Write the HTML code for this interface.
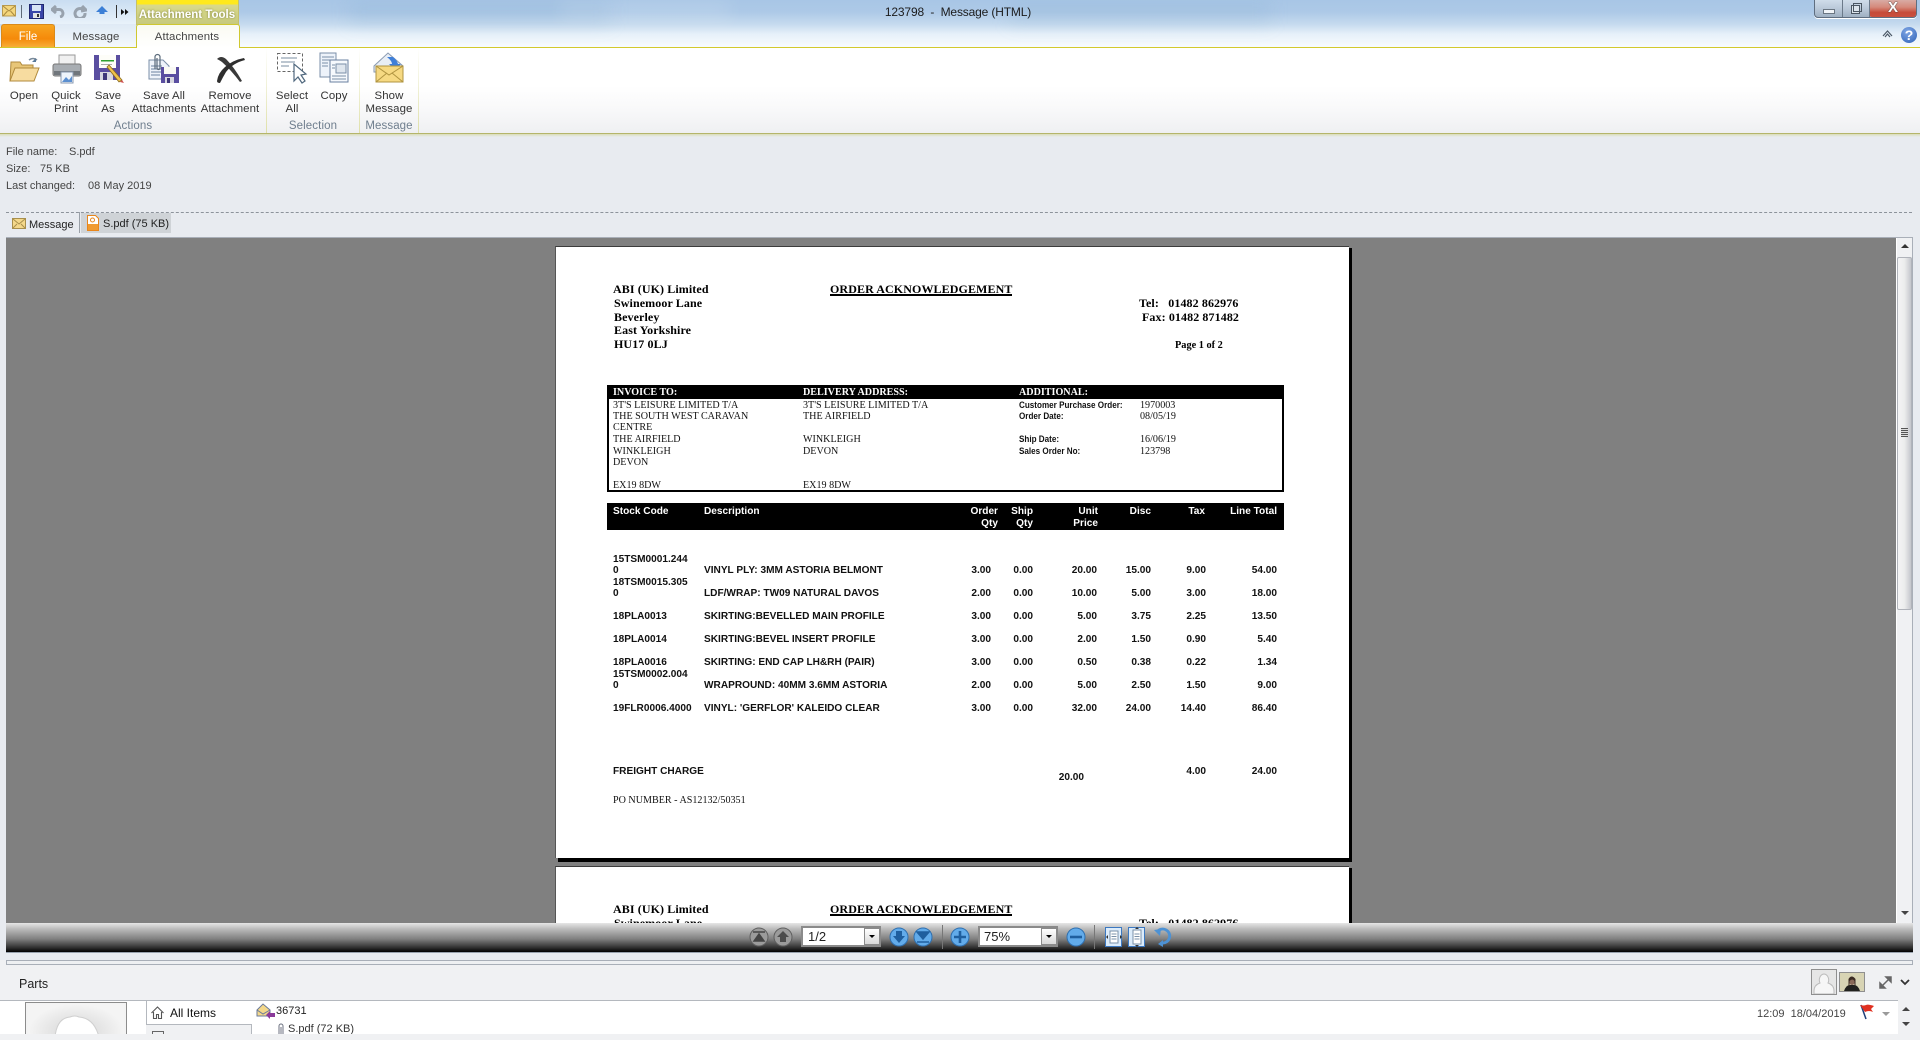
<!DOCTYPE html>
<html><head><meta charset="utf-8"><title>123798 - Message (HTML)</title>
<style>
html,body{margin:0;padding:0;width:1920px;height:1040px;overflow:hidden;background:#e8ebf0}
body{position:relative;font-family:"Liberation Sans",sans-serif;font-size:11.5px;color:#3b3b3b}
div,span,svg{position:absolute;box-sizing:border-box}
.t{white-space:pre;line-height:14px}
.c{transform:translateX(-50%)}
.r{text-align:right;transform:translateX(-100%)}
.rb{font-size:11.4px;color:#333;letter-spacing:.1px}
.i{font-size:11px;color:#444}
.g{font-size:11.5px;color:#6f7e8e;letter-spacing:.1px}
.s{font-family:"Liberation Serif",serif;font-weight:bold;color:#000;font-size:12px;letter-spacing:.1px}
.a{font-family:"Liberation Serif",serif;color:#111;font-size:10.1px}
.h{font-family:"Liberation Serif",serif;font-weight:bold;color:#fff;font-size:10.1px}
.l{font-weight:bold;color:#111;font-size:9.5px;transform:scaleX(.853);transform-origin:0 50%}
.b{font-weight:bold;color:#111;font-size:10.1px}
.w{font-weight:bold;color:#fff;font-size:10.1px}
</style></head><body>

<!-- title bar -->
<div style="left:0;top:0;width:1920px;height:47px;background:linear-gradient(#a8c6e6 0,#adc9e7 12px,#c5daee 24px,#e6f0f9 34px,#f6fafe 46px)"></div>
<div style="left:350px;top:0;width:260px;height:24px;background:rgba(120,160,200,.16);filter:blur(9px)"></div>
<div style="left:1010px;top:0;width:260px;height:24px;background:rgba(120,160,200,.14);filter:blur(9px)"></div>
<div style="left:560px;top:0;width:170px;height:22px;background:rgba(255,255,255,.12);filter:blur(9px)"></div>
<div style="left:0;top:0;width:136px;height:24px;background:linear-gradient(#c9ddf1,#e9f2fa)"></div>
<div class="t c" style="left:958px;top:5px;font-size:12px;color:#1c1c1c;letter-spacing:-.15px">123798  -  Message (HTML)</div>

<!-- QAT -->
<svg style="left:2px;top:5px" width="14" height="12" viewBox="0 0 14 12"><rect x=".5" y=".5" width="13" height="10.500" fill="#f4d67c" stroke="#b89a50"/><path d="M1 1l6 5 6-5M1 11l4.500-5M13 11L8.500 6" fill="none" stroke="#a98a40"/></svg>
<div style="left:21px;top:5px;width:1px;height:13px;background:#5f6b78"></div>
<svg style="left:29px;top:4px" width="15" height="15" viewBox="0 0 15 15"><rect width="14" height="14" x=".5" y=".5" fill="#3a46a8" stroke="#20286e"/><rect x="3" y="1" width="9" height="6" fill="#d8e4f5"/><rect x="4" y="9" width="7" height="5" fill="#e5e5e5"/><rect x="8" y="10" width="2" height="3" fill="#333"/></svg>
<svg style="left:51px;top:5px" width="14" height="13" viewBox="0 0 14 13"><path d="M5 1L1 4.500 5 8M2 4.500h6a3.800 3.800 0 0 1 1 7.500" fill="none" stroke="#98a2ad" stroke-width="3"/></svg>
<svg style="left:73px;top:5px" width="14" height="13" viewBox="0 0 14 13"><path d="M9 1l4 4-5 1M10 4.500A5 5 0 1 0 12 8" fill="none" stroke="#98a2ad" stroke-width="3"/></svg>
<svg style="left:95px;top:6px" width="14" height="10" viewBox="0 0 14 10"><path d="M7 0l6 6H9.500v2h-5V6H1z" fill="#3c7fd6"/></svg>
<div style="left:116px;top:5px;width:1px;height:13px;background:#333"></div>
<svg style="left:121px;top:9px" width="8" height="6" viewBox="0 0 8 6"><path d="M0 0l3.500 3L0 6zM4 0l3.500 3L4 6z" fill="#111"/></svg>

<!-- tabs -->
<div style="left:1px;top:24px;width:54px;height:24px;background:linear-gradient(#f7a51f,#f58a0a 60%,#f8b23c);border:1px solid #d98a1a;border-bottom:0;border-radius:3px 3px 0 0"></div>
<div class="t c" style="left:28px;top:30px;color:#fff;font-size:11.5px">File</div>
<div style="left:55px;top:24px;width:81px;height:23px;background:linear-gradient(#dfeaf5,#f4f8fc)"></div>
<div class="t c rb" style="left:96px;top:30px;color:#444">Message</div>
<div style="left:136px;top:0;width:103px;height:25px;background:linear-gradient(#ffe91c 0,#ffe91c 4px,#dad98a 5px,#c6c97e 100%);border-left:1px solid #c5c06a;border-right:1px solid #c5c06a"></div>
<div class="t c" style="left:187px;top:8px;color:#fff;font-size:11.5px;font-weight:bold;text-shadow:0 0 2px #7f8240">Attachment Tools</div>
<div style="left:136px;top:24px;width:104px;height:24px;background:linear-gradient(#fafbf2,#fff);border:1px solid #cfc830;border-bottom:0;border-radius:3px 3px 0 0"></div>
<div class="t c rb" style="left:187px;top:30px;color:#444">Attachments</div>

<!-- ribbon -->
<div style="left:0;top:47px;width:136px;height:1px;background:#d2c92e"></div>
<div style="left:239px;top:47px;width:1681px;height:1px;background:#d2c92e"></div>
<div style="left:0;top:48px;width:1920px;height:85px;background:linear-gradient(#fff 0,#fff 45%,#f9f9fa 70%,#eff0f2 100%)"></div>
<div style="left:137px;top:47px;width:102px;height:2px;background:#fff"></div>
<div style="left:0;top:133px;width:1920px;height:1px;background:#b5b56a"></div>
<div style="left:0;top:134px;width:1920px;height:3px;background:linear-gradient(#d9dcb8,#e8ebf0)"></div>
<div style="left:266px;top:48px;width:1px;height:85px;background:linear-gradient(#fff,#dfe0a8)"></div>
<div style="left:359px;top:48px;width:1px;height:85px;background:linear-gradient(#fff,#dfe0a8)"></div>
<div style="left:418px;top:48px;width:1px;height:85px;background:linear-gradient(#fff,#dfe0a8)"></div>

<!-- ribbon icons -->
<svg style="left:9px;top:55px" width="32" height="28" viewBox="0 0 32 28"><path d="M1 26L2 7h9l2 3h11v4H7z" fill="#e8c678" stroke="#b08a3c"/><path d="M1 26l5-13h24l-5 13z" fill="#f7dca0" stroke="#b08a3c"/><path d="M20 5q4-3 8 0" fill="none" stroke="#7a8a9a" stroke-width="1.500"/><path d="M27 3v4h-4z" fill="#5a7a9a"/></svg>
<svg style="left:52px;top:54px" width="30" height="30" viewBox="0 0 30 30"><rect x="7" y="1" width="16" height="10" fill="#f0f0f0" stroke="#999"/><rect x="1" y="10" width="28" height="12" rx="2" fill="#a8adb2" stroke="#777"/><rect x="2" y="17" width="26" height="4" fill="#70767c"/><rect x="9" y="18" width="12" height="11" fill="#eef4fb" stroke="#8a9ab0"/><path d="M10 28l4-5 3 3 3-4v6z" fill="#5b8fd0"/></svg>
<svg style="left:94px;top:55px" width="31" height="29" viewBox="0 0 31 29"><path d="M0 0h26v25H0z" fill="#5a4ea0"/><rect x="5" y="0" width="17" height="13" fill="#fdfdf8"/><rect x="7" y="5" width="13" height="1.500" fill="#30a030"/><rect x="7" y="9" width="11" height="1" fill="#aaa"/><rect x="6" y="17" width="13" height="8" fill="#d8d8e0"/><rect x="9" y="18" width="4" height="7" fill="#40387a"/><path d="M15 10l13 15-3 2L13 12z" fill="#eec24c" stroke="#8a6a20" stroke-width=".8"/><path d="M28 25l2 3-4-1z" fill="#d05050"/></svg>
<svg style="left:148px;top:53px" width="32" height="31" viewBox="0 0 32 31"><path d="M1 7h14l6 6v13H1z" fill="#eef3fa" stroke="#7b8fa8"/><path d="M3 13h11M3 16h11M3 19h11M3 22h9" stroke="#6b80a0"/><path d="M7 16V4a2.500 2.500 0 0 1 5 0v11a1.500 1.500 0 0 1-3 0V5" fill="none" stroke="#5a6a7a" stroke-width="1.200"/><path d="M13 14h18v16H13z" fill="#5a4ea0"/><rect x="16" y="14" width="12" height="7" fill="#fafaf4"/><rect x="17" y="24" width="9" height="6" fill="#d8d8e0"/><rect x="19" y="25" width="3" height="5" fill="#40387a"/></svg>
<svg style="left:217px;top:55px" width="28" height="28" viewBox="0 0 28 28"><path d="M0 4Q4 0 9 4 17 12 25 26l-2 1Q14 15 5 7 2 5 0 4z" fill="#3a3a3a"/><path d="M28 5Q16 8 9 17 6 22 3 28 0 28 0 26 1 18 8 12 16 5 27 3z" fill="#2e2e2e"/></svg>
<svg style="left:276px;top:52px" width="32" height="32" viewBox="0 0 32 32"><rect x="1.500" y="1.500" width="25" height="18" fill="#fff" stroke="#666" stroke-dasharray="3 2"/><path d="M5 6h16M5 10h14M5 14h8" stroke="#7a8ca0"/><path d="M18 12v17l4-4 4 6 3-2-4-6 5-1z" fill="#fff" stroke="#50687e" stroke-width="1.200"/></svg>
<svg style="left:318px;top:52px" width="32" height="32" viewBox="0 0 32 32"><path d="M2 1h16v24H2z" fill="#eef3fa" stroke="#7b8fa8"/><path d="M4 5h12M4 8h12M4 11h6M4 14h6" stroke="#7b8fa8"/><path d="M12 8h18v22H12z" fill="#f6f9fd" stroke="#6a80a0"/><rect x="18" y="12" width="10" height="9" fill="#dfe6ee" stroke="#7b8fa8"/><path d="M14 24h14M14 27h14M14 13h3M14 16h3" stroke="#7b8fa8"/></svg>
<svg style="left:373px;top:52px" width="32" height="32" viewBox="0 0 32 32"><path d="M1 14L15 1l15 13v6H1z" fill="#e8eef6" stroke="#8a9ab0"/><path d="M14 5h6q4 3 5 7h3l-6 6-6-6h3q0-3-5-7z" fill="#3f7fd8"/><rect x="3" y="14" width="27" height="16" fill="#f6d982" stroke="#b09440"/><path d="M3 14l13 9 14-9M3 30l11-9M30 30l-11-9" fill="none" stroke="#b09440"/></svg>

<!-- ribbon labels -->
<div class="t c rb" style="left:24px;top:89px">Open</div>
<div class="t c rb" style="left:66px;top:89px">Quick</div><div class="t c rb" style="left:66px;top:102px">Print</div>
<div class="t c rb" style="left:108px;top:89px">Save</div><div class="t c rb" style="left:108px;top:102px">As</div>
<div class="t c rb" style="left:164px;top:89px">Save All</div><div class="t c rb" style="left:164px;top:102px">Attachments</div>
<div class="t c rb" style="left:230px;top:89px">Remove</div><div class="t c rb" style="left:230px;top:102px">Attachment</div>
<div class="t c rb" style="left:292px;top:89px">Select</div><div class="t c rb" style="left:292px;top:102px">All</div>
<div class="t c rb" style="left:334px;top:89px">Copy</div>
<div class="t c rb" style="left:389px;top:89px">Show</div><div class="t c rb" style="left:389px;top:102px">Message</div>
<div class="t c g" style="left:133px;top:119px">Actions</div>
<div class="t c g" style="left:313px;top:119px">Selection</div>
<div class="t c g" style="left:389px;top:119px">Message</div>

<!-- right controls -->
<div style="left:1814px;top:-2px;width:103px;height:20px;border:1px solid #5f6e80;border-radius:0 0 4px 4px;box-shadow:0 1px 0 #fff;background:linear-gradient(#d2dfec,#b9c8d8 55%,#9fb0c2)"></div>
<div style="left:1869px;top:-1px;width:47px;height:18px;background:linear-gradient(#d9b0aa,#d58a7c 45%,#c64a38 75%,#c9503e);border-radius:0 0 3px 3px"></div>
<div style="left:1842px;top:0;width:1px;height:17px;background:#6b7a8a"></div>
<div style="left:1869px;top:0;width:1px;height:17px;background:#6b7a8a"></div>
<div style="left:1823px;top:9px;width:12px;height:5px;background:#f0f4f8;border:1px solid #6a7682"></div>
<div style="left:1851px;top:5px;width:9px;height:9px;border:1px solid #4a5662;background:#dbe4ec"></div>
<div style="left:1853px;top:3px;width:9px;height:9px;border:1px solid #4a5662"></div>
<div class="t c" style="left:1893px;top:1px;color:#fff;font-size:15px;font-weight:bold;text-shadow:0 0 1px #333,0 0 1px #333">X</div>
<svg style="left:1882px;top:29px" width="11" height="9" viewBox="0 0 11 9"><path d="M1 7l4.500-5L10 7M3 8l2.500-3L8 8" fill="none" stroke="#4b5866" stroke-width="1.200"/></svg>
<div style="left:1901px;top:27px;width:16px;height:16px;border-radius:50%;background:radial-gradient(circle at 40% 30%,#7fa6e4,#2f63b8)"></div>
<div class="t c" style="left:1909px;top:28px;color:#fff;font-weight:bold;font-size:14px">?</div>

<!-- info -->
<div class="t i" style="left:6px;top:145px">File name:</div><div class="t i" style="left:69px;top:145px">S.pdf</div>
<div class="t i" style="left:6px;top:162px">Size:</div><div class="t i" style="left:40px;top:162px">75 KB</div>
<div class="t i" style="left:6px;top:179px">Last changed:</div><div class="t i" style="left:88px;top:179px">08 May 2019</div>
<div style="left:6px;top:212px;width:1906px;height:1px;border-top:1px dashed #8d939b"></div>
<svg style="left:12px;top:218px" width="14" height="11" viewBox="0 0 14 11"><rect x=".5" y=".5" width="13" height="10" fill="#f4d88a" stroke="#a88f4c"/><path d="M1 1l6 5 6-5M1 10l4-4M13 10l-4-4" fill="none" stroke="#a88f4c"/></svg>
<div class="t i" style="left:29px;top:218px;color:#222">Message</div>
<div style="left:79px;top:212px;width:1px;height:21px;background:#9aa0a8"></div>
<div style="left:81px;top:213px;width:90px;height:20px;background:#cfd3d7"></div>
<svg style="left:87px;top:215px" width="12" height="16" viewBox="0 0 12 16"><path d="M.5.500h8l3 3v12H.500z" fill="#fff" stroke="#e8861c"/><rect x="1" y="9" width="10" height="6" fill="#f09a30"/><circle cx="5.500" cy="5" r="2" fill="none" stroke="#e8861c"/></svg>
<div class="t i" style="left:103px;top:217px;color:#222">S.pdf (75 KB)</div>

<!-- pdf viewer -->
<div style="left:6px;top:237px;width:1907px;height:686px;background:#808080;border-top:1px solid #a9afb8;overflow:hidden">
  <!-- page 1 -->
  <div style="left:549px;top:8px;width:794px;height:612px;background:#fff;border-top:1px solid #3c3c3c;border-left:1px solid #555"></div>
  <div style="left:1343px;top:10px;width:3px;height:614px;background:#000"></div>
  <div style="left:552px;top:620px;width:794px;height:4px;background:#000"></div>
  <!-- page 2 -->
  <div style="left:549px;top:628px;width:794px;height:57px;background:#fff;border-top:1px solid #3c3c3c;border-left:1px solid #555"></div>
  <div style="left:1343px;top:630px;width:3px;height:55px;background:#000"></div>

  <div style="left:-6px;top:-237px;width:1907px;height:922px;overflow:hidden">
    <div class="t s" style="left:613px;top:281px">ABI (UK) Limited</div>
    <div class="t s" style="left:614px;top:295px">Swinemoor Lane</div>
    <div class="t s" style="left:614px;top:309px">Beverley</div>
    <div class="t s" style="left:614px;top:322px">East Yorkshire</div>
    <div class="t s" style="left:614px;top:336px">HU17 0LJ</div>
    <div class="t s" style="left:830px;top:281px">ORDER ACKNOWLEDGEMENT</div>
    <div style="left:830px;top:293px;width:182px;height:2px;background:#000"></div>
    <div class="t s" style="left:1139px;top:295px">Tel:   01482 862976</div>
    <div class="t s" style="left:1142px;top:309px">Fax: 01482 871482</div>
    <div class="t s" style="left:1175px;top:338px;font-size:10.3px;letter-spacing:0">Page 1 of 2</div>

    <div style="left:607px;top:384px;width:677px;height:107px;border:2px solid #000;border-top:14px solid #000;background:#fff"></div>
    <div class="t h" style="left:613px;top:385px">INVOICE TO:</div>
    <div class="t h" style="left:803px;top:385px">DELIVERY ADDRESS:</div>
    <div class="t h" style="left:1019px;top:385px">ADDITIONAL:</div>
    <div class="t a" style="left:613px;top:398px">3T'S LEISURE LIMITED T/A</div>
    <div class="t a" style="left:613px;top:409px">THE SOUTH WEST CARAVAN</div>
    <div class="t a" style="left:613px;top:420px">CENTRE</div>
    <div class="t a" style="left:613px;top:432px">THE AIRFIELD</div>
    <div class="t a" style="left:613px;top:444px">WINKLEIGH</div>
    <div class="t a" style="left:613px;top:455px">DEVON</div>
    <div class="t a" style="left:613px;top:478px">EX19 8DW</div>
    <div class="t a" style="left:803px;top:398px">3T'S LEISURE LIMITED T/A</div>
    <div class="t a" style="left:803px;top:409px">THE AIRFIELD</div>
    <div class="t a" style="left:803px;top:432px">WINKLEIGH</div>
    <div class="t a" style="left:803px;top:444px">DEVON</div>
    <div class="t a" style="left:803px;top:478px">EX19 8DW</div>
    <div class="t l" style="left:1019px;top:398px">Customer Purchase Order:</div>
    <div class="t l" style="left:1019px;top:409px">Order Date:</div>
    <div class="t l" style="left:1019px;top:432px">Ship Date:</div>
    <div class="t l" style="left:1019px;top:444px">Sales Order No:</div>
    <div class="t a" style="left:1140px;top:398px">1970003</div>
    <div class="t a" style="left:1140px;top:409px">08/05/19</div>
    <div class="t a" style="left:1140px;top:432px">16/06/19</div>
    <div class="t a" style="left:1140px;top:444px">123798</div>

    <div style="left:607px;top:502px;width:677px;height:27px;background:#000"></div>
    <div class="t w" style="left:613px;top:504px">Stock Code</div>
    <div class="t w" style="left:704px;top:504px">Description</div>
    <div class="t w r" style="left:998px;top:504px">Order</div><div class="t w r" style="left:998px;top:516px">Qty</div>
    <div class="t w r" style="left:1033px;top:504px">Ship</div><div class="t w r" style="left:1033px;top:516px">Qty</div>
    <div class="t w r" style="left:1098px;top:504px">Unit</div><div class="t w r" style="left:1098px;top:516px">Price</div>
    <div class="t w r" style="left:1151px;top:504px">Disc</div>
    <div class="t w r" style="left:1205px;top:504px">Tax</div>
    <div class="t w r" style="left:1277px;top:504px">Line Total</div>

    <div class="t b" style="left:613px;top:552px">15TSM0001.244</div><div class="t b" style="left:613px;top:563px">0</div>
    <div class="t b" style="left:704px;top:563px">VINYL PLY: 3MM ASTORIA BELMONT</div>
    <div class="t b r" style="left:991px;top:563px">3.00</div><div class="t b r" style="left:1033px;top:563px">0.00</div><div class="t b r" style="left:1097px;top:563px">20.00</div><div class="t b r" style="left:1151px;top:563px">15.00</div><div class="t b r" style="left:1206px;top:563px">9.00</div><div class="t b r" style="left:1277px;top:563px">54.00</div>

    <div class="t b" style="left:613px;top:575px">18TSM0015.305</div><div class="t b" style="left:613px;top:586px">0</div>
    <div class="t b" style="left:704px;top:586px">LDF/WRAP: TW09 NATURAL DAVOS</div>
    <div class="t b r" style="left:991px;top:586px">2.00</div><div class="t b r" style="left:1033px;top:586px">0.00</div><div class="t b r" style="left:1097px;top:586px">10.00</div><div class="t b r" style="left:1151px;top:586px">5.00</div><div class="t b r" style="left:1206px;top:586px">3.00</div><div class="t b r" style="left:1277px;top:586px">18.00</div>

    <div class="t b" style="left:613px;top:609px">18PLA0013</div>
    <div class="t b" style="left:704px;top:609px">SKIRTING:BEVELLED MAIN PROFILE</div>
    <div class="t b r" style="left:991px;top:609px">3.00</div><div class="t b r" style="left:1033px;top:609px">0.00</div><div class="t b r" style="left:1097px;top:609px">5.00</div><div class="t b r" style="left:1151px;top:609px">3.75</div><div class="t b r" style="left:1206px;top:609px">2.25</div><div class="t b r" style="left:1277px;top:609px">13.50</div>

    <div class="t b" style="left:613px;top:632px">18PLA0014</div>
    <div class="t b" style="left:704px;top:632px">SKIRTING:BEVEL INSERT PROFILE</div>
    <div class="t b r" style="left:991px;top:632px">3.00</div><div class="t b r" style="left:1033px;top:632px">0.00</div><div class="t b r" style="left:1097px;top:632px">2.00</div><div class="t b r" style="left:1151px;top:632px">1.50</div><div class="t b r" style="left:1206px;top:632px">0.90</div><div class="t b r" style="left:1277px;top:632px">5.40</div>

    <div class="t b" style="left:613px;top:655px">18PLA0016</div>
    <div class="t b" style="left:704px;top:655px">SKIRTING: END CAP LH&amp;RH (PAIR)</div>
    <div class="t b r" style="left:991px;top:655px">3.00</div><div class="t b r" style="left:1033px;top:655px">0.00</div><div class="t b r" style="left:1097px;top:655px">0.50</div><div class="t b r" style="left:1151px;top:655px">0.38</div><div class="t b r" style="left:1206px;top:655px">0.22</div><div class="t b r" style="left:1277px;top:655px">1.34</div>

    <div class="t b" style="left:613px;top:667px">15TSM0002.004</div><div class="t b" style="left:613px;top:678px">0</div>
    <div class="t b" style="left:704px;top:678px">WRAPROUND: 40MM 3.6MM ASTORIA</div>
    <div class="t b r" style="left:991px;top:678px">2.00</div><div class="t b r" style="left:1033px;top:678px">0.00</div><div class="t b r" style="left:1097px;top:678px">5.00</div><div class="t b r" style="left:1151px;top:678px">2.50</div><div class="t b r" style="left:1206px;top:678px">1.50</div><div class="t b r" style="left:1277px;top:678px">9.00</div>

    <div class="t b" style="left:613px;top:701px">19FLR0006.4000</div>
    <div class="t b" style="left:704px;top:701px">VINYL: 'GERFLOR' KALEIDO CLEAR</div>
    <div class="t b r" style="left:991px;top:701px">3.00</div><div class="t b r" style="left:1033px;top:701px">0.00</div><div class="t b r" style="left:1097px;top:701px">32.00</div><div class="t b r" style="left:1151px;top:701px">24.00</div><div class="t b r" style="left:1206px;top:701px">14.40</div><div class="t b r" style="left:1277px;top:701px">86.40</div>

    <div class="t b" style="left:613px;top:764px">FREIGHT CHARGE</div>
    <div class="t b r" style="left:1084px;top:770px">20.00</div>
    <div class="t b r" style="left:1206px;top:764px">4.00</div>
    <div class="t b r" style="left:1277px;top:764px">24.00</div>
    <div class="t a" style="left:613px;top:793px">PO NUMBER - AS12132/50351</div>

    <div class="t s" style="left:613px;top:901px">ABI (UK) Limited</div>
    <div class="t s" style="left:830px;top:901px">ORDER ACKNOWLEDGEMENT</div>
    <div style="left:830px;top:913px;width:182px;height:2px;background:#000"></div>
    <div class="t s" style="left:614px;top:915px;height:7px;overflow:hidden">Swinemoor Lane</div>
    <div class="t s" style="left:1139px;top:915px;height:7px;overflow:hidden">Tel:   01482 862976</div>
  </div>
</div>

<!-- scrollbar -->
<div style="left:1896px;top:238px;width:17px;height:685px;background:#f0f1f3;border-left:1px solid #fff;border-right:1px solid #a9afb8"></div>
<svg style="left:1900px;top:243px" width="10" height="7" viewBox="0 0 10 7"><path d="M5 1l4 4H1z" fill="#333"/></svg>
<div style="left:1897px;top:257px;width:15px;height:353px;background:linear-gradient(90deg,#f4f4f5,#eceded 50%,#c4c6cc);border:1px solid #b0b3ba;border-radius:2px"></div>
<div style="left:1901px;top:428px;width:7px;height:9px;background:repeating-linear-gradient(#555 0,#555 1px,#ddd 1px,#ddd 2px)"></div>
<svg style="left:1900px;top:910px" width="10" height="7" viewBox="0 0 10 7"><path d="M1 1h8L5 5z" fill="#444"/></svg>

<!-- pdf toolbar -->
<div style="left:6px;top:923px;width:1907px;height:30px;background:linear-gradient(#e6e6e6 0,#bcbcbc 20%,#808080 55%,#303030 85%,#000 100%);border-bottom:1px solid #98a2ae"></div>
<div style="left:942px;top:925px;width:1px;height:24px;background:#777"></div>
<div style="left:1094px;top:925px;width:1px;height:24px;background:#777"></div>

<svg style="left:749px;top:926px" width="44" height="22" viewBox="0 0 44 22"><circle cx="10" cy="11" r="9" fill="#9b9b9b" stroke="#5f5f5f"/><circle cx="34" cy="11" r="9" fill="#9b9b9b" stroke="#5f5f5f"/><path d="M4 6h12M5 15l5-7 5 7z" stroke="#444" stroke-width="1.500" fill="#444"/><path d="M34 5l6 6h-3v5h-6v-5h-3z" fill="#4c4c4c"/></svg>
<div style="left:801px;top:926px;width:80px;height:21px;background:#fff;border:2px solid #8a8a8a"></div>
<div class="t" style="left:808px;top:930px;font-size:13px;color:#222">1/2</div>
<div style="left:864px;top:928px;width:16px;height:17px;background:linear-gradient(#fff,#d8d8d8);border:1px solid #8a8a8a"></div>
<svg style="left:868px;top:934px" width="8" height="5" viewBox="0 0 8 5"><path d="M1 1h6L4 4z" fill="#000"/></svg>
<svg style="left:889px;top:926px" width="44" height="22" viewBox="0 0 44 22"><circle cx="10" cy="11" r="9" fill="#62abea" stroke="#2f6fae"/><circle cx="34" cy="11" r="9" fill="#62abea" stroke="#2f6fae"/><path d="M7 5h6v5h3l-6 7-6-7h3z" fill="#1f5f9f"/><path d="M28 6h12L34 13zM28 16h12" stroke="#1f5f9f" stroke-width="1.500" fill="#1f5f9f"/></svg>
<svg style="left:950px;top:926px" width="20" height="22" viewBox="0 0 20 22"><circle cx="10" cy="11" r="9" fill="#62abea" stroke="#2f6fae"/><path d="M4 11h12M10 5v12" stroke="#1f5f9f" stroke-width="2.600"/></svg>
<div style="left:978px;top:926px;width:80px;height:21px;background:#fff;border:2px solid #8a8a8a"></div>
<div class="t" style="left:984px;top:930px;font-size:13px;color:#222">75%</div>
<div style="left:1041px;top:928px;width:16px;height:17px;background:linear-gradient(#fff,#d8d8d8);border:1px solid #8a8a8a"></div>
<svg style="left:1045px;top:934px" width="8" height="5" viewBox="0 0 8 5"><path d="M1 1h6L4 4z" fill="#000"/></svg>
<svg style="left:1066px;top:926px" width="20" height="22" viewBox="0 0 20 22"><circle cx="10" cy="11" r="9" fill="#62abea" stroke="#2f6fae"/><path d="M4 11h12" stroke="#1f5f9f" stroke-width="2.600"/></svg>
<svg style="left:1105px;top:927px" width="18" height="20" viewBox="0 0 18 20"><rect x=".5" y=".5" width="16" height="19" fill="#dcecfb" stroke="#3c78c0"/><rect x="5" y="4" width="8" height="12" fill="#fff" stroke="#7a90a8"/><path d="M6.500 7h5M6.500 9.500h5M6.500 12h5" stroke="#7a90a8"/><path d="M1 10l2-2v4zM17 10l-2-2v4z" fill="#333"/></svg>
<svg style="left:1128px;top:927px" width="18" height="20" viewBox="0 0 18 20"><rect x=".5" y=".5" width="16" height="19" fill="#dcecfb" stroke="#3c78c0"/><rect x="5" y="3" width="8" height="14" fill="#fff" stroke="#7a90a8"/><path d="M6.500 7h5M6.500 9.500h5M6.500 12h5" stroke="#7a90a8"/><path d="M9 0l2 2H7zM9 20l2-2H7z" fill="#333"/></svg>
<svg style="left:1153px;top:926px" width="19" height="22" viewBox="0 0 19 22"><path d="M4 6a7 7 0 1 1 5 11" fill="none" stroke="#4d92d4" stroke-width="2.800"/><path d="M1 4l7-1-1 7z M10 14v7l-5-3z" fill="#4d92d4"/></svg>

<!-- Below toolbar -->
<div style="left:0;top:960px;width:1920px;height:80px;background:#f0f1f3"></div>
<div style="left:6px;top:960px;width:1907px;height:5px;border:1px solid #a9afb8;background:#eef0f2"></div>
<div class="t" style="left:19px;top:977px;font-size:12.5px;color:#222">Parts</div>
<div style="left:1811px;top:969px;width:26px;height:26px;background:#e6e6e6;border:1px solid #8f8f8f;overflow:hidden">
  <svg style="left:0;top:0" width="24" height="24" viewBox="0 0 24 24"><path d="M12 4a5 6 0 0 1 4 9c3 1 6 3 6 8v3H2v-3c0-5 3-7 6-8a5 6 0 0 1 4-9z" fill="#f6f6f6" stroke="#bcbcbc"/></svg></div>
<div style="left:1839px;top:972px;width:26px;height:20px;background:#d8d4b4;border:1px solid #8f8f8f;overflow:hidden">
  <svg style="left:0;top:0" width="24" height="18" viewBox="0 0 24 18"><path d="M4 18q2-6 6-6h4q4 0 6 6z" fill="#22221e"/><ellipse cx="12" cy="8" rx="3" ry="4" fill="#8a6a58"/><path d="M8.500 13V6q3-5 7 0v7h-1V8q-2-3-5 0v5z" fill="#3a2a22"/></svg></div>
<svg style="left:1879px;top:976px" width="13" height="13" viewBox="0 0 13 13"><path d="M7 1h5v5zM1 12V7l5 5zM3 10l7-7" fill="#666" stroke="#666" stroke-width="1.500"/></svg>
<svg style="left:1900px;top:978px" width="10" height="8" viewBox="0 0 10 8"><path d="M1 2l4 4 4-4" fill="none" stroke="#333" stroke-width="1.800"/></svg>

<div style="left:0;top:1000px;width:1898px;height:34px;background:#fff;border-top:1px solid #b4b8be"></div>
<div style="left:25px;top:1002px;width:102px;height:32px;background:#f3f3f3;border:1px solid #8c8c8c;border-bottom:0;overflow:hidden">
  <div style="left:2px;top:1px;width:96px;height:31px;background:radial-gradient(ellipse at 50% 90%,#d4d4d4,#f4f4f4 70%)"></div>
  <svg style="left:28px;top:12px" width="46" height="20" viewBox="0 0 46 20"><path d="M1 22Q3 3 16 2q5-2 9 0 15 1 20 20z" fill="#fff" stroke="#cfcfcf"/></svg>
</div>
<div style="left:146px;top:1001px;width:106px;height:24px;background:#fff;border:1px solid #b4b8be;border-right:0;border-top:0"></div>
<svg style="left:151px;top:1006px" width="13" height="13" viewBox="0 0 13 13"><path d="M.5 7L6.500 1l6 6M2.500 6v6.500h3v-4h2v4h3V6" fill="none" stroke="#555" stroke-width="1.100"/></svg>
<div class="t" style="left:170px;top:1006px;font-size:12px;color:#111">All Items</div>
<div style="left:146px;top:1025px;width:106px;height:9px;background:#f0f1f3;border-right:1px solid #b4b8be"></div>
<div style="left:152px;top:1031px;width:12px;height:3px;border:1px solid #666;border-bottom:0"></div>
<svg style="left:256px;top:1003px" width="20" height="16" viewBox="0 0 20 16"><path d="M1 7L7 1l7 6v6H1z" fill="#f4d88a" stroke="#6a7a9a"/><path d="M1 7l6 4 7-4" fill="none" stroke="#6a7a9a"/><path d="M10 12l4-4v2h5v4h-5v2z" fill="#8a3a9a"/></svg>
<div class="t" style="left:276px;top:1004px;font-size:11px;color:#222">36731</div>
<svg style="left:277px;top:1023px" width="8" height="11" viewBox="0 0 8 11"><path d="M2 11V3a2 2 0 0 1 4 0v8M4 11V4" fill="none" stroke="#6c7280"/></svg>
<div class="t" style="left:288px;top:1022px;font-size:11px;color:#333">S.pdf (72 KB)</div>
<div style="left:0;top:1034px;width:1920px;height:6px;background:#f0f1f3"></div>
<div class="t" style="left:1757px;top:1007px;font-size:11px;color:#444">12:09  18/04/2019</div>
<svg style="left:1859px;top:1004px" width="16" height="16" viewBox="0 0 16 16"><path d="M2 1l5 14" stroke="#20407a" stroke-width="1.500"/><path d="M1 1q4 1 6 0t8 1l-3 3 2 3q-4-2-8 0z" fill="#e03020"/></svg>
<svg style="left:1881px;top:1011px" width="10" height="6" viewBox="0 0 10 6"><path d="M1 1h8L5 5z" fill="#9a9a9a"/></svg>
<svg style="left:1901px;top:1006px" width="10" height="7" viewBox="0 0 10 7"><path d="M5 1l4 4H1z" fill="#444"/></svg>
<svg style="left:1901px;top:1021px" width="10" height="7" viewBox="0 0 10 7"><path d="M1 1h8L5 5z" fill="#444"/></svg>
</body></html>
